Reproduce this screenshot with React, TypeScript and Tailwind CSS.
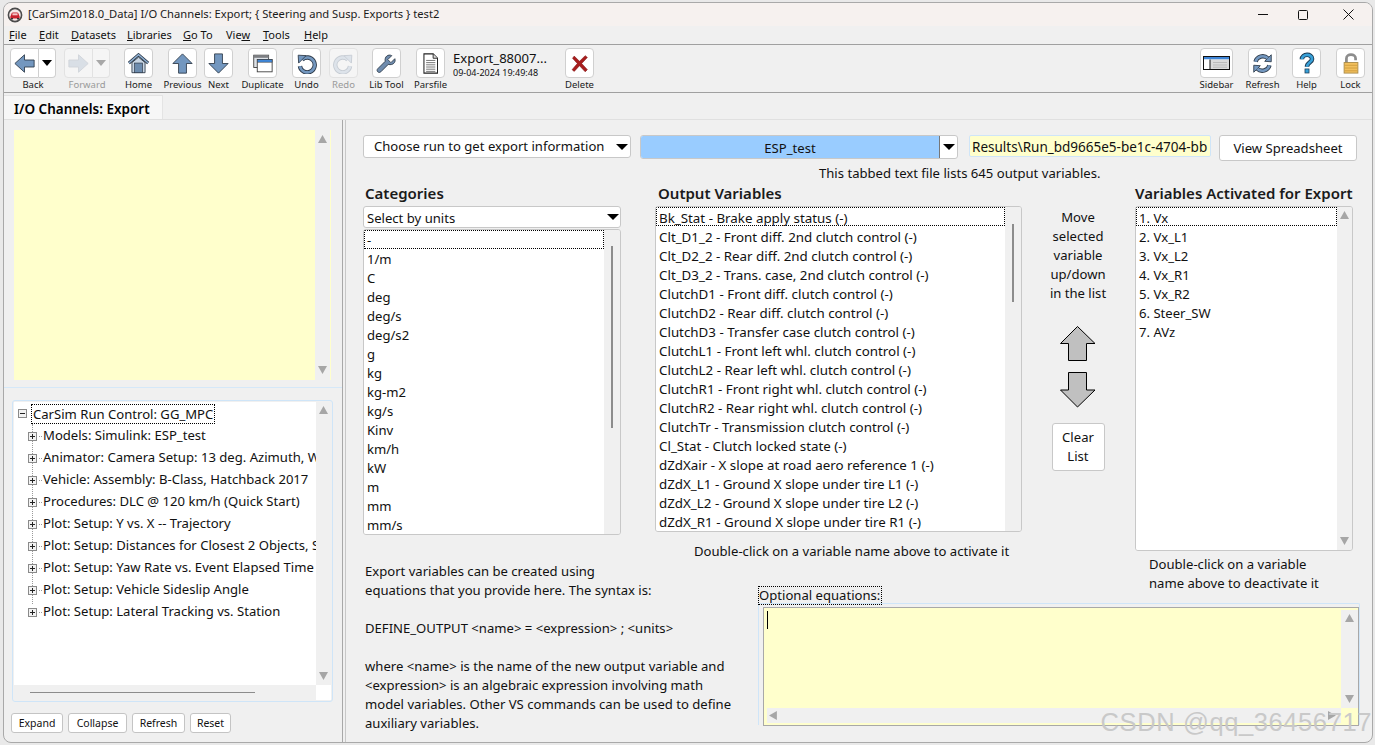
import React from "react";

const BLUE = "#7397bf";
const DARK = "#2f3b4a";

function Logo() {
  return (
    <svg width="16" height="16" viewBox="0 0 16 16" className="ml-[3px] shrink-0">
      <circle cx="8" cy="8" r="6.6" fill="#f4e9e9" stroke="#4b4b4b" strokeWidth="1.6" />
      <path d="M3.4 9.6 L4.6 6.4 Q5 5.4 6 5.4 H10 Q11 5.4 11.4 6.4 L12.6 9.6 V11.4 H3.4 Z" fill="#c8202c" />
      <rect x="5.4" y="6.3" width="5.2" height="2" fill="#f3c4c6" />
      <rect x="4" y="11" width="2" height="1.4" fill="#333" />
      <rect x="10" y="11" width="2" height="1.4" fill="#333" />
    </svg>
  );
}

const ic = { width: 21, height: 21, viewBox: "0 0 24 24" };

function ArrowLeft() {
  return (
    <svg {...ic}>
      <path d="M1 12 L12 2 V8 H23 V16 H12 V22 Z" fill={BLUE} stroke={DARK} strokeWidth="1" />
    </svg>
  );
}
function ArrowRight() {
  return (
    <svg {...ic}>
      <path d="M23 12 L12 2 V8 H1 V16 H12 V22 Z" fill="#d9dfe6" stroke="#d0d4d9" strokeWidth="1" />
    </svg>
  );
}
function ArrowUp() {
  return (
    <svg {...ic}>
      <path d="M12 1 L23 12 H16.5 V23 H7.5 V12 H1 Z" fill={BLUE} stroke={DARK} strokeWidth="1" />
    </svg>
  );
}
function ArrowDown() {
  return (
    <svg {...ic}>
      <path d="M12 23 L23 12 H16.5 V1 H7.5 V12 H1 Z" fill={BLUE} stroke={DARK} strokeWidth="1" />
    </svg>
  );
}
function Home() {
  return (
    <svg {...ic}>
      <path d="M1 11.5 L12 2 L23 11.5" fill="none" stroke={DARK} strokeWidth="3.4" />
      <path d="M1 11.5 L12 2 L23 11.5" fill="none" stroke="#8fb0d2" strokeWidth="1.6" />
      <path d="M4.5 11 L12 4.8 L19.5 11 V22.5 H4.5 Z" fill="#c9d6e4" stroke={DARK} strokeWidth="1" />
      <rect x="7.5" y="11.5" width="9" height="11" fill="#6d8cae" stroke={DARK} strokeWidth="0.8" />
    </svg>
  );
}
function Duplicate() {
  return (
    <svg {...ic}>
      <rect x="2" y="2.5" width="17" height="14" fill="#dfe3e8" stroke="#3a3a3a" />
      <rect x="2" y="2.5" width="17" height="3" fill="#7d7f83" />
      <rect x="6" y="7.5" width="17" height="14" fill="#ffffff" stroke="#3a3a3a" />
      <rect x="6" y="7.5" width="17" height="3" fill="#3f86d8" stroke="#3a3a3a" strokeWidth="0.6" />
    </svg>
  );
}
function Undo({ ghost }: { ghost?: boolean }) {
  const d = "M7 7.5 A8.5 8.5 0 1 1 4.5 15";
  return (
    <svg {...ic} style={ghost ? { transform: "scaleX(-1)" } : undefined}>
      <path d={d} fill="none" stroke={ghost ? "#c6ccd3" : DARK} strokeWidth="5" />
      <path d={d} fill="none" stroke={ghost ? "#dde3ea" : BLUE} strokeWidth="3" />
      <path d="M2.5 2.5 L11.5 3 L3 11.5 Z" fill={ghost ? "#dde3ea" : BLUE} stroke={ghost ? "#c6ccd3" : DARK} strokeWidth="1" />
    </svg>
  );
}
function Wrench() {
  return (
    <svg {...ic}>
      <path
        d="M21.5 6.5 L17 11 L13.5 7.5 L18 3 C14 1 9.5 4 10.5 9.5 L2 18 C1 19 1 20.5 2 21.5 C3 22.5 4.5 22.5 5.5 21.5 L14 13 C19.5 14.5 23 10.5 21.5 6.5 Z"
        fill="#6f8cae"
        stroke={DARK}
        strokeWidth="1"
      />
    </svg>
  );
}
function Doc() {
  return (
    <svg {...ic}>
      <path d="M4.5 1 H15 L20 6 V23 H4.5 Z" fill="#fff" stroke="#222" strokeWidth="1.2" />
      <path d="M15 1 V6 H20" fill="#ddd" stroke="#222" />
      <path d="M7 8.5 H17.5 M7 11 H17.5 M7 13.5 H17.5 M7 16 H17.5 M7 18.5 H17.5 M7 21 H17.5" stroke="#666" strokeWidth="1" />
    </svg>
  );
}
function XIcon() {
  return (
    <svg {...ic}>
      <path d="M4 6 L6 3.5 L12 9.5 L18.5 3 L21 5 L14.5 12 L21 19 L18.5 21.5 L12 14.5 L6 21 L3.5 19 L9.5 12 Z" fill="#a81d1d" stroke="#7d1212" strokeWidth="0.6" />
    </svg>
  );
}
function SidebarIcon() {
  return (
    <svg width="27" height="14" viewBox="0 0 27 14">
      <rect x="0.5" y="0.5" width="26" height="13" fill="#fff" stroke="#111" />
      <rect x="1" y="1" width="25" height="2.5" fill="#3f86d8" />
      <rect x="1" y="3.5" width="6" height="9.5" fill="#ffffff" />
      <rect x="7" y="3.5" width="19" height="9.5" fill="#dcdcdc" />
      <path d="M7 3.5 V13" stroke="#111" strokeWidth="1" />
      <path d="M10 6.5 H24 M10 9 H24 M10 11.2 H24" stroke="#bbb" />
    </svg>
  );
}
function RefreshIcon() {
  const a = "M4 10 A8.5 8.5 0 0 1 18 6";
  const b = "M20 14 A8.5 8.5 0 0 1 6 18";
  return (
    <svg {...ic}>
      <path d={a} fill="none" stroke={DARK} strokeWidth="5" />
      <path d={b} fill="none" stroke={DARK} strokeWidth="5" />
      <path d="M14.5 9.5 L22 10 L22 2 Z" fill={BLUE} stroke={DARK} strokeWidth="1" />
      <path d="M9.5 14.5 L2 14 L2 22 Z" fill={BLUE} stroke={DARK} strokeWidth="1" />
      <path d={a} fill="none" stroke={BLUE} strokeWidth="3" />
      <path d={b} fill="none" stroke={BLUE} strokeWidth="3" />
    </svg>
  );
}
function HelpIcon() {
  const d = "M6.5 8 C6.5 1.5 17.5 1.5 17.5 7.5 C17.5 11.5 12 11.5 12 16";
  return (
    <svg {...ic} width="22" height="24">
      <path d={d} fill="none" stroke="#1c3a52" strokeWidth="5" />
      <path d={d} fill="none" stroke="#38a0d8" strokeWidth="3" />
      <rect x="9.8" y="18.5" width="4.4" height="4.4" fill="#38a0d8" stroke="#1c3a52" strokeWidth="0.8" />
    </svg>
  );
}
function LockIcon() {
  return (
    <svg {...ic} width="22" height="24">
      <path d="M7 12 V7 C7 1.5 17 1.5 17 7 V9" fill="none" stroke="#8d8d8d" strokeWidth="3" />
      <rect x="4.5" y="11.5" width="15" height="11.5" fill="#f2c05e" stroke="#a98b4a" />
      <path d="M5 14.5 H19 M5 17.5 H19 M5 20.5 H19" stroke="#cf9c3d" />
    </svg>
  );
}

function Tool({ label, children, dim, className = "w-[29px]" }: { label: string; children: React.ReactNode; dim?: boolean; className?: string }) {
  return (
    <div className={`flex shrink-0 flex-col items-center ${className}`}>
      <div className={`flex h-[30px] w-full items-center justify-center rounded-[4px] border ${dim ? "border-[#e2e2e2] bg-[#f5f5f5]" : "border-[#d0d0d0] bg-white"}`}>
        {children}
      </div>
      <span className={`mt-[1px] whitespace-nowrap text-[9.5px] leading-[12px] ${dim ? "text-[#9a9a9a]" : "text-[#1a1a1a]"}`}>{label}</span>
    </div>
  );
}

function SplitTool({ label, children, dim, className = "" }: { label: string; children: React.ReactNode; dim?: boolean; className?: string }) {
  return (
    <div className={`flex w-[46px] shrink-0 flex-col items-center ${className}`}>
      <div className="flex h-[30px] w-[46px]">
        <div className={`flex w-[29px] items-center justify-center rounded-l-[4px] border ${dim ? "border-[#e2e2e2] bg-[#f5f5f5]" : "border-[#d0d0d0] bg-white"}`}>{children}</div>
        <div className={`flex w-[17px] items-center justify-center rounded-r-[4px] border border-l-0 ${dim ? "border-[#e2e2e2] bg-[#f5f5f5]" : "border-[#d0d0d0] bg-white"}`}>
          <span className={`h-0 w-0 border-x-[5.5px] border-t-[6px] border-x-transparent ${dim ? "border-t-[#a8a8a8]" : "border-t-black"}`} />
        </div>
      </div>
      <span className={`mt-[1px] whitespace-nowrap text-[9.5px] leading-[12px] ${dim ? "text-[#9a9a9a]" : "text-[#1a1a1a]"}`}>{label}</span>
    </div>
  );
}

function Tri({ dir, color = "#a6a6a6" }: { dir: "up" | "down" | "left" | "right"; color?: string }) {
  const pts = { up: "0,7 4,0 8,7", down: "0,0 8,0 4,7", left: "7,0 7,8 0,4", right: "0,0 0,8 7,4" }[dir];
  return (
    <svg width="9" height="9" viewBox="0 0 8 8" className="shrink-0">
      <polygon points={pts} fill={color} />
    </svg>
  );
}

function VBar({ className = "" }: { className?: string }) {
  return (
    <div className={`flex w-[15px] shrink-0 flex-col items-center justify-between bg-[#f0f0f0] py-[4px] ${className}`}>
      <Tri dir="up" />
      <Tri dir="down" />
    </div>
  );
}

function ListBox({ rows, thumb, className, scroll, lh = "leading-[18px]" }: { rows: string[]; thumb?: { top: number; h: number }; className: string; scroll: "thumb" | "arrows"; lh?: string }) {
  return (
    <div className={`flex overflow-hidden rounded-[3px] border border-[#c8c8c8] bg-[#f0f0f0] ${className}`}>
      <div className="min-w-0 flex-1 overflow-hidden bg-white">
        {rows.map((r, i) => (
          <div
            key={r}
            className={`h-[19px] whitespace-nowrap ${lh} ${i === 0 ? "border border-dotted border-black pl-[2px]" : "pl-[3px] pt-[1px]"}`}
          >
            {r}
          </div>
        ))}
      </div>
      {scroll === "arrows" ? (
        <VBar />
      ) : (
        <div className="w-[16px] shrink-0 bg-[#f0f0f0]">
          <div className="mx-auto w-[2px] bg-[#8c8c8c]" style={{ marginTop: thumb?.top, height: thumb?.h }} />
        </div>
      )}
    </div>
  );
}

const UNITS = ["-", "1/m", "C", "deg", "deg/s", "deg/s2", "g", "kg", "kg-m2", "kg/s", "Kinv", "km/h", "kW", "m", "mm", "mm/s"];
const OUTPUTS = [
  "Bk_Stat - Brake apply status (-)",
  "Clt_D1_2 - Front diff. 2nd clutch control (-)",
  "Clt_D2_2 - Rear diff. 2nd clutch control (-)",
  "Clt_D3_2 - Trans. case, 2nd clutch control (-)",
  "ClutchD1 - Front diff. clutch control (-)",
  "ClutchD2 - Rear diff. clutch control (-)",
  "ClutchD3 - Transfer case clutch control (-)",
  "ClutchL1 - Front left whl. clutch control (-)",
  "ClutchL2 - Rear left whl. clutch control (-)",
  "ClutchR1 - Front right whl. clutch control (-)",
  "ClutchR2 - Rear right whl. clutch control (-)",
  "ClutchTr - Transmission clutch control (-)",
  "Cl_Stat - Clutch locked state (-)",
  "dZdXair - X slope at road aero reference 1 (-)",
  "dZdX_L1 - Ground X slope under tire L1 (-)",
  "dZdX_L2 - Ground X slope under tire L2 (-)",
  "dZdX_R1 - Ground X slope under tire R1 (-)",
];
const ACTIVE = ["1. Vx", "2. Vx_L1", "3. Vx_L2", "4. Vx_R1", "5. Vx_R2", "6. Steer_SW", "7. AVz"];
const TREE = [
  "Models: Simulink: ESP_test",
  "Animator: Camera Setup: 13 deg. Azimuth, Wide Angle",
  "Vehicle: Assembly: B-Class, Hatchback 2017",
  "Procedures: DLC @ 120 km/h (Quick Start)",
  "Plot: Setup: Y vs. X -- Trajectory",
  "Plot: Setup: Distances for Closest 2 Objects, Speed",
  "Plot: Setup: Yaw Rate vs. Event Elapsed Time",
  "Plot: Setup: Vehicle Sideslip Angle",
  "Plot: Setup: Lateral Tracking vs. Station",
];

function Expander({ open }: { open?: boolean }) {
  return (
    <span className="relative block h-[9px] w-[9px] shrink-0 border border-[#8a8a8a] bg-[#f2f2f2]">
      <span className="absolute left-[1px] top-[3px] h-[1px] w-[5px] bg-[#222]" />
      {!open && <span className="absolute left-[3px] top-[1px] h-[5px] w-[1px] bg-[#222]" />}
    </span>
  );
}

function SmallBtn({ children, w }: { children: string; w: string }) {
  return (
    <button className={`h-[20px] rounded-[3px] border border-[#c4c4c4] bg-white text-[10.5px] leading-[18px] text-[#111] ${w}`}>{children}</button>
  );
}

function Caret() {
  return <span className="h-0 w-0 shrink-0 border-x-[6px] border-t-[6px] border-x-transparent border-t-black" />;
}

export default function App() {
  return (
    <div
      className="relative h-[745px] w-[1375px] overflow-hidden bg-[#e9e9e9] pb-[2px] pl-[3px] pr-[2px] pt-[2px] text-[13.1px] text-[#111]"
      style={{ fontFamily: '"Noto Sans", "Open Sans", sans-serif' }}
    >
      <div className="flex h-full flex-col overflow-hidden rounded-[8px] border border-[#a9a9a9] bg-[#f0f0f0]">
        {/* title bar */}
        <div className="flex h-[23px] shrink-0 items-center bg-[#f6f1ef]">
          <Logo />
          <span className="ml-[5px] whitespace-nowrap text-[11.2px] text-[#1a1a1a]">[CarSim2018.0_Data] I/O Channels: Export; {"{"} Steering and Susp. Exports {"}"} test2</span>
          <div className="ml-auto flex items-center">
            <span className="h-[1px] w-[10px] bg-[#111]" />
            <span className="ml-[30px] h-[10px] w-[10px] rounded-[1.5px] border border-[#111]" />
            <svg width="11" height="11" viewBox="0 0 11 11" className="ml-[35px] mr-[18px]">
              <path d="M0.5 0.5 L10.5 10.5 M10.5 0.5 L0.5 10.5" stroke="#111" strokeWidth="1" />
            </svg>
          </div>
        </div>
        {/* menu */}
        <div className="flex h-[18px] shrink-0 items-center pl-[5px] text-[11px] leading-[16px] text-[#111]">
          <span className="w-[30px]"><u>F</u>ile</span>
          <span className="w-[32px]"><u>E</u>dit</span>
          <span className="w-[56px]"><u>D</u>atasets</span>
          <span className="w-[56px]"><u>L</u>ibraries</span>
          <span className="w-[43px]"><u>G</u>o To</span>
          <span className="w-[37px]">Vie<u>w</u></span>
          <span className="w-[41px]"><u>T</u>ools</span>
          <span><u>H</u>elp</span>
        </div>
        {/* toolbar */}
        <div className="flex h-[49px] shrink-0 items-start border-y border-[#a0a0a0] pl-[6px] pr-[7px] pt-[3px]">
          <SplitTool label="Back"><ArrowLeft /></SplitTool>
          <SplitTool label="Forward" dim className="ml-[8px]"><ArrowRight /></SplitTool>
          <Tool label="Home" className="ml-[14px] w-[29px]"><Home /></Tool>
          <Tool label="Previous" className="ml-[15px] w-[29px]"><ArrowUp /></Tool>
          <Tool label="Next" className="ml-[7px] w-[29px]"><ArrowDown /></Tool>
          <Tool label="Duplicate" className="ml-[15px] w-[29px]"><Duplicate /></Tool>
          <Tool label="Undo" className="ml-[15px] w-[29px]"><Undo /></Tool>
          <Tool label="Redo" dim className="ml-[8px] w-[29px]"><Undo ghost /></Tool>
          <Tool label="Lib Tool" className="ml-[14px] w-[29px]"><Wrench /></Tool>
          <Tool label="Parsfile" className="ml-[15px] w-[29px]"><Doc /></Tool>
          <div className="ml-[8px] w-[112px] shrink-0 pt-[1px]">
            <div className="whitespace-nowrap text-[13.1px] leading-[18px]">Export_88007...</div>
            <div className="mt-[1px] whitespace-nowrap text-[9px] leading-[10px]">09-04-2024 19:49:48</div>
          </div>
          <Tool label="Delete"><XIcon /></Tool>
          <Tool label="Sidebar" className="ml-auto w-[33px]"><SidebarIcon /></Tool>
          <Tool label="Refresh" className="ml-[15px] w-[29px]"><RefreshIcon /></Tool>
          <Tool label="Help" className="ml-[15px] w-[29px]"><HelpIcon /></Tool>
          <Tool label="Lock" className="ml-[15px] w-[29px]"><LockIcon /></Tool>
        </div>
        {/* tab strip */}
        <div className="flex h-[27px] shrink-0 items-end border-b border-[#e0e0e0]">
          <div className="flex h-[24px] w-[159px] items-center border-r border-t border-[#e4e4e4] bg-[#f7f7f7] pl-[10px] pt-[2px] text-[13.5px] font-semibold leading-[18px] text-black">I/O Channels: Export</div>
        </div>
        {/* body */}
        <div className="flex min-h-0 flex-1">
          {/* left panel */}
          <div className="flex w-[339px] shrink-0 flex-col border-r border-[#a8a8a8]">
            <div className="ml-[10px] mt-[10px] flex h-[250px] w-[317px] bg-[#ffffcc] pr-[1px]">
              <div className="flex-1" />
              <VBar className="py-[5px]" />
            </div>
            <div className="mt-[7px] h-[1px] bg-[#d5e8f8]" />
            <div className="ml-[8px] mt-[12px] flex h-[302px] w-[321px] flex-col rounded-[3px] border border-[#cfe5f8] bg-[#f0f0f0] p-[1px]">
              <div className="flex min-h-0 flex-1">
                <div className="relative min-w-0 flex-1 overflow-hidden bg-white">
                  <span className="absolute bottom-[81px] left-[18px] top-[22px] w-0 border-l border-dotted border-[#9a9a9a]" />
                  <div className="flex h-[23px] items-center whitespace-nowrap pl-[4px]">
                    <Expander open />
                    <span className="ml-[4px] shrink-0 border border-dotted border-black px-[1px] leading-[18px]">CarSim Run Control: GG_MPC</span>
                  </div>
                  {TREE.map((t) => (
                    <div key={t} className="relative flex h-[22px] items-center whitespace-nowrap pl-[14px]">
                      <Expander />
                      <span className="ml-[2px] w-[3px] shrink-0 border-t border-dotted border-[#9a9a9a]" />
                      <span className="ml-[1px] shrink-0">{t}</span>
                    </div>
                  ))}
                </div>
                <VBar />
              </div>
              <div className="flex h-[15px] shrink-0 items-center">
                <div className="ml-[16px] h-[1px] w-[225px] bg-[#8c8c8c]" />
                <div className="ml-auto h-[15px] w-[15px] bg-white" />
              </div>
            </div>
            <div className="ml-[7px] mt-[11px] flex gap-[5px]">
              <SmallBtn w="w-[52px]">Expand</SmallBtn>
              <SmallBtn w="w-[59px]">Collapse</SmallBtn>
              <SmallBtn w="w-[53px]">Refresh</SmallBtn>
              <SmallBtn w="w-[41px]">Reset</SmallBtn>
            </div>
          </div>
          <div className="w-[3px] shrink-0 border-r border-[#c8c8c8]" />
          {/* right panel */}
          <div className="min-w-0 flex-1 pl-[17px]">
            {/* row 1 */}
            <div className="mt-[15px] flex h-[26px] items-start">
              <div className="flex h-[23px] w-[268px] shrink-0 items-center justify-between rounded-[3px] border border-[#c8c8c8] bg-white pl-[10px] pr-[2px]">
                <span className="mt-[1px] whitespace-nowrap">Choose run to get export information</span>
                <Caret />
              </div>
              <div className="ml-[9px] flex h-[24px] w-[318px] shrink-0 overflow-hidden rounded-[3px] border border-[#c8c8c8] bg-white">
                <div className="flex flex-1 items-center justify-center border-r border-[#777] bg-[#99ccff] pt-[3px]">ESP_test</div>
                <div className="flex w-[17px] items-center justify-center">
                  <Caret />
                </div>
              </div>
              <div className="ml-[11px] flex h-[22px] w-[242px] shrink-0 items-center overflow-hidden rounded-[2px] border border-[#cfe5f8] bg-[#ffffcc] pl-[2px]">
                <span className="mt-[3px] whitespace-nowrap text-[13.5px]">Results\Run_bd9665e5-be1c-4704-bb</span>
              </div>
              <div className="ml-[8px] flex h-[26px] w-[138px] shrink-0 items-center justify-center rounded-[3px] border border-[#c8c8c8] bg-white pt-[2px]">View Spreadsheet</div>
            </div>
            {/* row 2 */}
            <div className="ml-[456px] mt-[3px] h-[19px] whitespace-nowrap leading-[19px]">This tabbed text file lists 645 output variables.</div>
            {/* row 3 */}
            <div className="mt-[1px] flex">
              <div className="w-[258px] shrink-0">
                <div className="h-[22px] pl-[2px] text-[15px] font-semibold leading-[19px] text-[#1a1a1a]">Categories</div>
                <div className="flex h-[22px] items-center justify-between rounded-[3px] border border-[#c8c8c8] bg-white pl-[3px] pr-[1px]">
                  <span className="mt-[3px]">Select by units</span>
                  <Caret />
                </div>
                <ListBox rows={UNITS} scroll="thumb" thumb={{ top: 16, h: 182 }} className="mt-[1px] h-[306px]" />
              </div>
              <div className="ml-[34px] w-[367px] shrink-0">
                <div className="h-[22px] pl-[3px] text-[15px] font-semibold leading-[19px] text-[#1a1a1a]">Output Variables</div>
                <ListBox rows={OUTPUTS} scroll="thumb" thumb={{ top: 17, h: 78 }} className="h-[326px] text-[13.35px]" lh="leading-[20px]" />
                <div className="ml-[39px] mt-[10px] h-[19px] whitespace-nowrap leading-[19px]">Double-click on a variable name above to activate it</div>
              </div>
              <div className="ml-[12px] w-[88px] shrink-0 pt-[24px]">
                <div className="text-center leading-[19px]">
                  Move
                  <br />
                  selected
                  <br />
                  variable
                  <br />
                  up/down
                  <br />
                  in the list
                </div>
                <svg width="36" height="82" viewBox="0 0 36 82" className="mx-auto mt-[23px] block">
                  <path d="M17.5 0.5 L35 17.5 H26.5 V34.5 H8.5 V17.5 H0.5 Z" fill="#c0c0c0" stroke="#000" />
                  <path d="M8.5 46.5 H26.5 V64 H35 L17.5 81 L0.5 64 H8.5 Z" fill="#c0c0c0" stroke="#000" />
                </svg>
                <div className="mx-auto mt-[15px] flex h-[48px] w-[53px] items-center justify-center rounded-[3px] border border-[#c8c8c8] bg-white text-center leading-[19px]">
                  Clear
                  <br />
                  List
                </div>
              </div>
              <div className="ml-[13px] w-[218px] shrink-0">
                <div className="h-[22px] whitespace-nowrap text-[15px] font-semibold leading-[19px] text-[#1a1a1a]">Variables Activated for Export</div>
                <ListBox rows={ACTIVE} scroll="arrows" className="h-[345px]" lh="leading-[20px]" />
              </div>
            </div>
            {/* bottom row */}
            <div className="flex">
              <div className="ml-[2px] mt-[1px] w-[393px] shrink-0 leading-[19px]">
                <div className="h-[19px]">Export variables can be created using</div>
                <div className="h-[19px]">equations that you provide here. The syntax is:</div>
                <div className="h-[19px]" />
                <div className="h-[19px]">{"DEFINE_OUTPUT <name> = <expression> ; <units>"}</div>
                <div className="h-[19px]" />
                <div className="h-[19px]">{"where <name> is the name of the new output variable and"}</div>
                <div className="h-[19px]">{"<expression> is an algebraic expression involving math"}</div>
                <div className="h-[19px]">model variables. Other VS commands can be used to define</div>
                <div className="h-[19px]">auxiliary variables.</div>
              </div>
              <div className="w-[602px] shrink-0">
                <div className="flex h-[42px] items-start">
                  <div className="relative z-10 mt-[25px] h-[19px] w-[124px] shrink-0 whitespace-nowrap border border-dotted border-black leading-[16px]">Optional equations:</div>
                  <div className="-mt-[6px] ml-[267px] whitespace-nowrap leading-[19px]">
                    Double-click on a variable
                    <br />
                    name above to deactivate it
                  </div>
                </div>
                <div className="h-[122px] rounded-t-[2px] border-x border-t border-[#cfe5f8] pl-[4px] pt-[3px]">
                  <div className="flex h-[119px] flex-col border border-[#a8a8a8] bg-[#ffffcc] pt-[2px]">
                    <div className="flex min-h-0 flex-1">
                      <div className="flex-1 pl-[3px] pt-[1px]">
                        <span className="block h-[18px] w-[1px] bg-black" />
                      </div>
                      <VBar className="w-[17px]" />
                    </div>
                    <div className="ml-[3px] mb-[2px] flex h-[15px] shrink-0">
                      <div className="flex flex-1 items-center justify-between bg-[#f0f0f0] pl-[2px] pr-[4px]">
                        <Tri dir="left" />
                        <Tri dir="right" />
                      </div>
                      <div className="w-[17px]" />
                    </div>
                  </div>
                </div>
              </div>
            </div>
          </div>
        </div>
      </div>
      <div
        className="absolute bottom-[8px] right-[3px] whitespace-nowrap text-[25.5px] leading-[30px] tracking-[0.6px] text-[#c9c9c9]"
        style={{ fontFamily: '"Liberation Sans", sans-serif' }}
      >
        CSDN @qq_36456717
      </div>
    </div>
  );
}
